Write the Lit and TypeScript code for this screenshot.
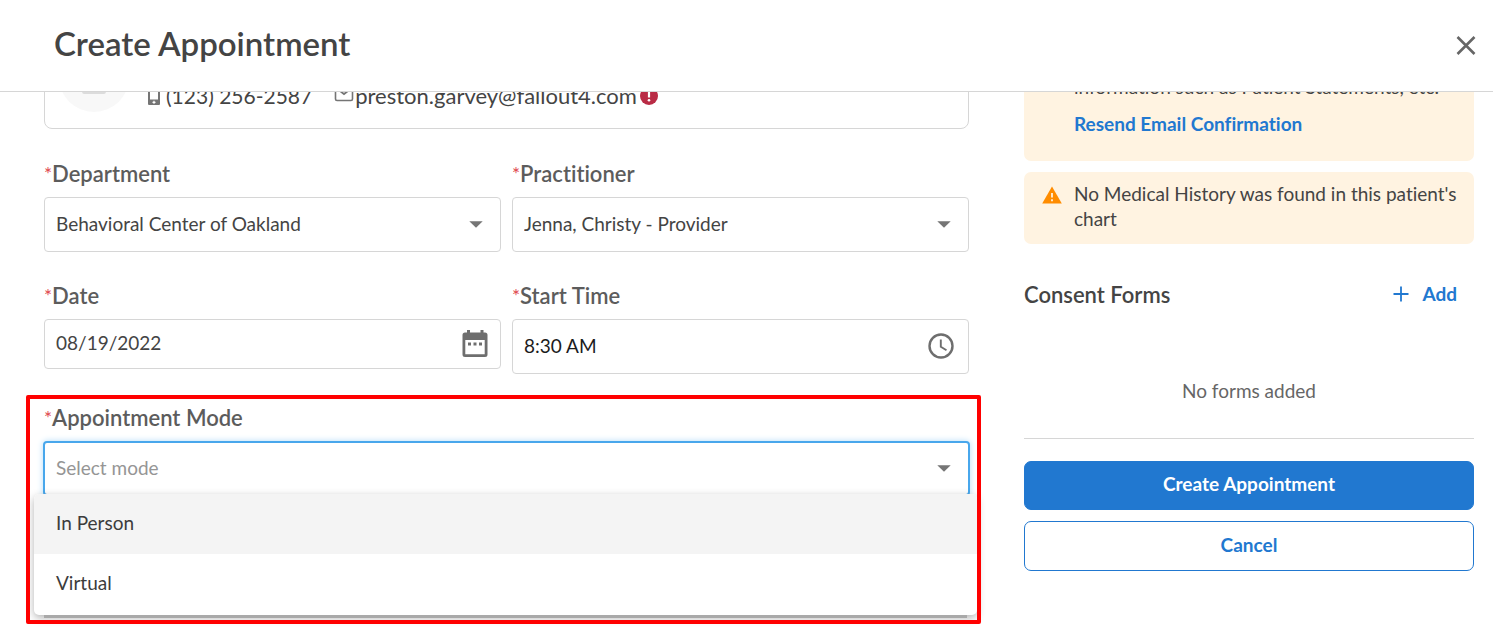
import { LitElement, html, css } from "lit";
import { customElement, property } from "lit/decorators.js";

const phoneIcon = html`<svg width="14" height="22" viewBox="0 0 14 22" aria-hidden="true">
  <rect x="2" y="1" width="10" height="18" rx="1" fill="none" stroke="#757575" stroke-width="2" />
  <path d="M1 14.500h12V18.500a1.500 1.500 0 0 1-1.500 1.500h-9A1.500 1.500 0 0 1 1 18.500z" fill="#757575" />
  <path d="M7 15.800v3M5.500 17.300h3" stroke="#fff" stroke-width="1.200" />
</svg>`;

const mailIcon = html`<svg class="envelope" width="20" height="18" viewBox="0 0 20 18" aria-hidden="true">
  <rect x="1.500" y="1.500" width="17" height="14" rx="1.500" fill="none" stroke="#757575" stroke-width="1.600" />
  <path d="M2 3l8 6 8-6" fill="none" stroke="#757575" stroke-width="1.800" />
</svg>`;

const errorIcon = html`<svg width="18" height="18" viewBox="0 0 18 18" role="img" aria-label="Email not confirmed">
  <circle cx="9" cy="9" r="9" fill="#b92b45" />
  <path d="M9 3.500v7" stroke="#fff" stroke-width="2.200" />
  <circle cx="9" cy="13.300" r="1.300" fill="#fff" />
</svg>`;

const warningIcon = html`<svg width="20" height="18" viewBox="0 0 20 18" aria-hidden="true">
  <path d="M10 .5L19.800 17.500H.2z" fill="#ff8c00" />
  <path d="M10 7v4.500M10 13.300v2" stroke="#fff1df" stroke-width="1.800" />
</svg>`;

const calendarIcon = html`<svg width="26" height="28" viewBox="0 0 26 28" aria-hidden="true">
  <path d="M3 2.500h20a2.500 2.500 0 0 1 2.500 2.500v19.500a2.500 2.500 0 0 1-2.500 2.500H3a2.500 2.500 0 0 1-2.500-2.500V5A2.500 2.500 0 0 1 3 2.500zM3.300 10v14.300h19.400V10z" fill="#6e6e6e" fill-rule="evenodd" />
  <path d="M5 0h3v4H5zM18.500 0h3v4h-3z" fill="#6e6e6e" />
  <path d="M6 12.500h3v3H6zM11.500 12.500h3v3h-3zM17 12.500h3v3h-3z" fill="#6e6e6e" />
</svg>`;

const clockIcon = html`<svg width="26" height="26" viewBox="0 0 26 26" aria-hidden="true">
  <circle cx="13" cy="13" r="11.500" fill="none" stroke="#6e6e6e" stroke-width="2.400" />
  <path d="M12.800 6.500v7.300l5.700 3.400" fill="none" stroke="#6e6e6e" stroke-width="1.900" />
</svg>`;

const arrowIcon = html`<svg class="arrow" width="14" height="7" viewBox="0 0 14 7" aria-hidden="true">
  <path d="M.3.200h13.400L7 6.800z" fill="#757575" />
</svg>`;

const base = css`
  * {
    box-sizing: border-box;
  }
  button,
  input,
  select {
    font: inherit;
    color: inherit;
    margin: 0;
  }
  svg {
    display: block;
    flex: none;
  }
`;

@customElement("form-field")
export class FormField extends LitElement {
  static styles = [
    base,
    css`
      :host {
        display: block;
        position: relative;
        min-width: 0;
      }
      .label {
        display: flex;
        font-size: 22px;
        font-weight: 600;
        line-height: 24px;
        color: #5c5c5c;
        margin-bottom: 11px;
        width: fit-content;
      }
      .star {
        color: #e0474c;
        font-size: 19px;
        font-weight: 400;
      }
      .box {
        position: relative;
        display: flex;
        align-items: center;
        height: 55px;
        border: 1px solid #d6d6d6;
        border-radius: 4px;
        background: #fff;
        color: #444;
      }
      .compact {
        height: 50px;
      }
      .focused {
        margin: 0 -1px;
        border: 2px solid #48a7ec;
        color: #959595;
        box-shadow: 0 0 6px #b5dcf8;
      }
      .dark {
        color: #1c1c1c;
      }
      .control {
        appearance: none;
        flex: 1;
        min-width: 0;
        height: 100%;
        padding: 0 48px 2px 11px;
        border: 0;
        outline: 0;
        background: none;
      }
      .compact .control {
        padding-bottom: 3px;
      }
      .trail {
        position: absolute;
        right: 12px;
        top: 0;
        bottom: 0;
        display: flex;
        align-items: center;
        padding: 0;
        border: 0;
        background: none;
      }
      .dark .trail {
        right: 14px;
        bottom: 2px;
      }
      .arrow {
        position: absolute;
        right: 17px;
        top: 50%;
        margin-top: -4px;
        pointer-events: none;
      }
    `,
  ];

  @property() label = "";
  @property() value = "";
  @property() kind: "select" | "date" | "time" = "select";
  @property({ type: Boolean }) focused = false;

  private renderControl() {
    if (this.kind === "select") {
      return html`<select id="control" class="control"><option>${this.value}</option></select>${arrowIcon}`;
    }
    return html`<input id="control" class="control" type="text" .value=${this.value} />
      <button class="trail" type="button" aria-label=${`Choose ${this.kind}`}>
        ${this.kind === "date" ? calendarIcon : clockIcon}
      </button>`;
  }

  render() {
    const modifiers = [
      this.kind === "date" ? "compact" : "",
      this.kind === "time" ? "dark" : "",
      this.focused ? "focused" : "",
    ].join(" ");
    return html`
      <label class="label" for="control"><span class="star">*</span>${this.label}</label>
      <div class="box ${modifiers}">${this.renderControl()}</div>
      <slot></slot>
    `;
  }
}

@customElement("app-root")
export class AppRoot extends LitElement {
  static styles = [
    base,
    css`
      :host {
        display: flex;
        flex-direction: column;
        height: 100vh;
        overflow: hidden;
        background: #fff;
        color: #444;
        font-family: Lato, "Open Sans", sans-serif;
        font-size: 19px;
        line-height: 25px;
        font-variant-ligatures: none;
      }
      .header {
        display: flex;
        align-items: center;
        justify-content: space-between;
        flex: none;
        height: 92px;
        padding: 0 16px 0 54px;
        border-bottom: 1px solid #d6d6d6;
      }
      .title {
        margin: 0;
        padding-bottom: 6px;
        font-size: 33px;
        font-weight: 600;
        line-height: 40px;
      }
      .close {
        padding: 0;
        border: 0;
        background: none;
      }
      .viewport {
        flex: 1;
        min-height: 0;
        overflow: hidden;
      }
      .content {
        display: grid;
        grid-template-columns: minmax(0, 1fr) 450px;
        column-gap: 55px;
        margin-top: -60px;
        padding: 0 19px 0 44px;
      }
      .patient {
        display: flex;
        align-items: flex-end;
        gap: 18px;
        height: 97px;
        padding: 0 14px 16px;
        margin-bottom: 33px;
        border: 1px solid #d6d6d6;
        border-radius: 8px;
      }
      .avatar {
        display: flex;
        justify-content: center;
        align-items: center;
        width: 70px;
        height: 70px;
        border-radius: 50%;
        background: #f8f8f8;
      }
      .contact {
        display: flex;
        align-items: center;
        gap: 22px;
        font-size: 21px;
        line-height: 32px;
      }
      .entry {
        display: flex;
        align-items: center;
        gap: 5px;
      }
      .mail {
        gap: 1px;
        font-size: 22px;
      }
      .mail svg:last-child {
        margin-left: 2px;
      }
      .envelope {
        margin-bottom: 4px;
      }
      .fields {
        display: grid;
        grid-template-columns: 1fr 1fr;
        gap: 32px 11px;
      }
      .wide {
        grid-column: 1 / -1;
      }
      .menu {
        position: absolute;
        top: 88px;
        left: -10px;
        right: -8px;
        margin: 0;
        padding: 0;
        list-style: none;
        border-radius: 5px;
        background: #fff;
        color: #3c3c3c;
        box-shadow: 0 13px 0 -10px #a9a9a9, 0 3px 9px rgba(0, 0, 0, 0.3);
      }
      .option {
        padding: 16px 22px 20px;
      }
      .active {
        padding-bottom: 19px;
        border-radius: 5px 5px 0 0;
        background: #f4f4f4;
      }
      .highlight {
        position: absolute;
        top: -11px;
        left: -18px;
        right: -12px;
        height: 229px;
        border: 4px solid #f00;
        border-radius: 2px;
        pointer-events: none;
      }
      .side {
        display: flex;
        flex-direction: column;
      }
      .alert {
        display: flex;
        gap: 12px;
        padding: 9px 10px 13px 18px;
        margin-bottom: 11px;
        border-radius: 7px;
        background: #fff3e1;
      }
      .alert svg {
        margin-top: 5px;
      }
      .tall {
        height: 129px;
        align-items: flex-end;
        padding: 0 10px 25px 50px;
      }
      .copy {
        margin: 0;
      }
      .link {
        display: inline-block;
        margin-top: 12px;
        color: #2178d0;
        font-weight: 700;
        text-decoration: none;
      }
      .consent {
        display: flex;
        align-items: center;
        justify-content: space-between;
        margin: 26px 17px 0 0;
      }
      .heading {
        margin: 0;
        font-size: 22px;
        font-weight: 600;
        line-height: 26px;
      }
      .add {
        display: flex;
        align-items: center;
        gap: 13px;
        padding: 0 0 2px;
        border: 0;
        background: none;
        color: #2178d0;
        font-weight: 700;
      }
      .empty {
        margin: 0;
        padding: 70px 0 35px;
        border-bottom: 1px solid #d6d6d6;
        text-align: center;
        color: #666;
      }
      .actions {
        display: flex;
        flex-direction: column;
        gap: 11px;
        margin-top: 22px;
      }
      .action {
        height: 50px;
        padding: 0 0 4px;
        border: 1px solid #2178d0;
        border-radius: 7px;
        background: #fff;
        color: #2178d0;
        font-weight: 700;
      }
      .primary {
        height: 49px;
        background: #2178d0;
        color: #fff;
      }
    `,
  ];

  render() {
    return html`
      <header class="header">
        <h1 class="title">Create Appointment</h1>
        <button class="close" type="button" aria-label="Close">
          <svg width="22" height="22" viewBox="0 0 22 22">
            <path d="M2.500 2l17 17M19.500 2l-17 17" stroke="#666" stroke-width="2.600" />
          </svg>
        </button>
      </header>
      <div class="viewport">
        <main class="content">
          <form>
            <section class="patient">
              <div class="avatar">
                <svg width="24" height="34" viewBox="0 0 24 34" aria-hidden="true">
                  <circle cx="12" cy="9" r="7" fill="#dcdcdc" />
                  <path d="M0 31v-5c0-4 6-6 12-6s12 2 12 6v5q0 3-2 3H2q-2 0-2-3z" fill="#dcdcdc" />
                </svg>
              </div>
              <div class="contact">
                <span class="entry">${phoneIcon}(123) 256-2587</span>
                <span class="entry mail">${mailIcon}preston.garvey@fallout4.com${errorIcon}</span>
              </div>
            </section>
            <div class="fields">
              <form-field label="Department" value="Behavioral Center of Oakland"></form-field>
              <form-field label="Practitioner" value="Jenna, Christy - Provider"></form-field>
              <form-field label="Date" value="08/19/2022" kind="date"></form-field>
              <form-field label="Start Time" value="8:30 AM" kind="time"></form-field>
              <form-field class="wide" label="Appointment Mode" value="Select mode" focused>
                <ul class="menu" role="listbox" aria-label="Appointment Mode">
                  <li class="option active" role="option" aria-selected="true">In Person</li>
                  <li class="option" role="option" aria-selected="false">Virtual</li>
                </ul>
                <div class="highlight"></div>
              </form-field>
            </div>
          </form>
          <aside class="side">
            <section class="alert tall">
              <div>
                <p class="copy">information such as Patient Statements, etc.</p>
                <a class="link" href="#resend">Resend Email Confirmation</a>
              </div>
            </section>
            <section class="alert">
              ${warningIcon}
              <p class="copy">No Medical History was found in this patient's chart</p>
            </section>
            <div class="consent">
              <h2 class="heading">Consent Forms</h2>
              <button class="add" type="button">
                <svg width="16" height="16" viewBox="0 0 16 16" aria-hidden="true">
                  <path d="M8 .5v15M.5 8h15" stroke="#2178d0" stroke-width="1.800" />
                </svg>
                Add
              </button>
            </div>
            <p class="empty">No forms added</p>
            <div class="actions">
              <button class="action primary" type="button">Create Appointment</button>
              <button class="action" type="button">Cancel</button>
            </div>
          </aside>
        </main>
      </div>
    `;
  }
}
